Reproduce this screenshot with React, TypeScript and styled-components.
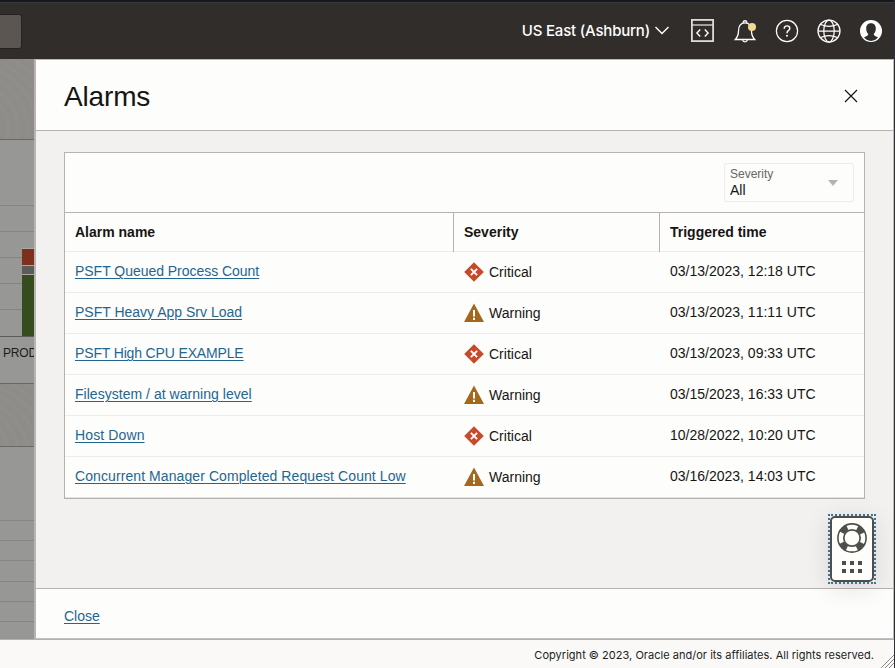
import React from "react";
import styled, { createGlobalStyle } from "styled-components";

const GlobalStyle = createGlobalStyle`
  *, *::before, *::after { box-sizing: border-box; }
  body {
    margin: 0;
    background: #faf9f8;
    color: #161513;
    font-family: "Liberation Sans", Arial, sans-serif;
    font-size: 14px;
  }
  svg { display: block; flex: none; }
`;

const Window = styled.div`
  position: relative;
  width: 895px;
  height: 668px;
  overflow: hidden;
  display: flex;
  flex-direction: column;
  border-right: 1px solid #2c2e36;
`;

const TopBar = styled.header`
  flex: none;
  height: 59px;
  display: flex;
  align-items: flex-start;
  justify-content: space-between;
  background: #312d2a;
  border-top: 2px solid #17181a;
  box-shadow: inset 0 1px 0 #3a3940;
`;

const SearchStub = styled.div`
  width: 22px;
  height: 35px;
  margin-top: 12px;
  background: #5b5651;
  border: 1px solid #26221f;
  border-left: 0;
  border-radius: 0 3px 3px 0;
`;

const TopActions = styled.div`
  display: flex;
  align-items: center;
  height: 57px;
  padding-right: 11px;
  color: #fff;
`;

const Region = styled.div`
  display: flex;
  align-items: center;
  gap: 5px;
  margin-right: 22px;
  font: 500 15px/20px Inter, sans-serif;
  letter-spacing: -0.2px;
  white-space: nowrap;
`;

const ActionIcons = styled.div`
  display: flex;
  align-items: center;
  gap: 18px;
`;

const Main = styled.main`
  flex: none;
  height: 581px;
  display: flex;
  border-bottom: 1px solid #b5b1ae;
`;

const Backdrop = styled.aside`
  flex: none;
  width: 34px;
  overflow: hidden;
  background: #979795;
`;

const Band = styled.div<{ $height: number }>`
  height: ${(p) => p.$height}px;
  border-bottom: 1px solid #6b6866;
  background: repeating-radial-gradient(ellipse at -60px 70px, #8d8c89 0 5px, #8f8e8b 7px 10px);
`;

const ChartBlock = styled.div`
  height: 244px;
  border-bottom: 1px solid #6b6866;
`;

const ChartLabel = styled.div`
  padding: 9px 0 0 3px;
  font-size: 12px;
  line-height: 14px;
  letter-spacing: -0.2px;
  color: #1d1c1b;
`;

const Panel = styled.section`
  flex: 1;
  display: flex;
  flex-direction: column;
  background: #fdfdfc;
  border: 1px solid #bdbab7;
  border-left: 2px solid #b7b4b2;
  border-bottom-color: #c0bfc2;
`;

const PanelHeader = styled.div`
  flex: none;
  height: 71px;
  display: flex;
  align-items: center;
  justify-content: space-between;
  padding: 2px 35px 0 28px;
  border-bottom: 1px solid #b8b2af;
`;

const Title = styled.h1`
  margin: 0;
  padding-top: 2px;
  font-size: 28px;
  line-height: 36px;
  font-weight: 400;
  letter-spacing: -0.15px;
`;

const PanelBody = styled.div`
  flex: none;
  height: 458px;
  padding: 21px 28px;
  background: #f2f1f0;
  border-bottom: 1px solid #b8b2af;
`;

const PanelFooter = styled.div`
  flex: 1;
  display: flex;
  align-items: center;
  padding: 5px 28px 0;
`;

const Link = styled.a<{ $tracking?: number }>`
  color: #1f6690;
  letter-spacing: ${(p) => p.$tracking ?? 0}px;
  text-decoration: underline;
  text-decoration-thickness: 1px;
  text-underline-offset: 2px;
  cursor: pointer;
`;

const TableCard = styled.div`
  width: 801px;
  background: #fdfdfc;
  border: 1px solid #b8b2af;
`;

const Toolbar = styled.div`
  height: 60px;
  display: flex;
  justify-content: flex-end;
  padding: 10px 10px 0 0;
  border-bottom: 1px solid #b8b2af;
`;

const Select = styled.div`
  width: 130px;
  height: 39px;
  display: flex;
  justify-content: space-between;
  align-items: center;
  padding: 0 15px 0 5px;
  border: 1px solid #efedec;
  border-radius: 2px;
`;

const SelectText = styled.div`
  display: flex;
  flex-direction: column;
  padding-bottom: 2px;
  line-height: 16px;
  small { font-size: 12px; color: #6a6663; }
`;

const Row = styled.div<{ $head?: boolean }>`
  display: grid;
  grid-template-columns: 389px 206px 204px;
  height: ${(p) => (p.$head ? 39 : 41)}px;
  border-bottom: 1px solid #efedec;
  font-weight: ${(p) => (p.$head ? 700 : 400)};
  &:last-child { border-bottom-color: #e4e1df; }
`;

const HeadCell = styled.div`
  padding: 11px 10px 0;
  line-height: 16px;
  margin-bottom: -1px;
  & + & { box-shadow: -1px 0 0 #b8b2af; }
`;

const Cell = styled.div`
  padding: 11px 10px 0;
  line-height: 16px;
  white-space: nowrap;
`;

const TimeCell = styled(Cell)`
  font-kerning: none;
`;

const SeverityCell = styled(Cell)`
  display: flex;
  align-items: flex-start;
  gap: 5px;
  padding-top: 10px;
  line-height: 20px;
`;

const Copyright = styled.footer`
  flex: 1;
  padding: 8px 20px 0 0;
  text-align: right;
  font: 400 11px/14px Inter, sans-serif;
  color: #201e1c;
  letter-spacing: 0.026px;
`;

const HelpFrame = styled.div`
  position: absolute;
  left: 830px;
  top: 516px;
  outline: 2px dotted #3d7394;
  box-shadow: 0 5px 26px rgba(40, 30, 30, 0.13);
`;

const HelpButton = styled.button`
  width: 44px;
  height: 66px;
  padding: 5px 0 0;
  display: flex;
  flex-direction: column;
  align-items: center;
  gap: 8px;
  background: #fdfdfc;
  border: 2px solid #504e49;
  border-radius: 5px;
`;

const ResizeGrip = styled.div`
  position: absolute;
  right: 0;
  bottom: 0;
`;

const Chevron = () => (
  <svg width="14" height="9" viewBox="0 0 14 9" fill="none" stroke="#fff" strokeWidth="1.4">
    <path d="M.5 1 7 7.500 13.500 1" />
  </svg>
);

const ConsoleIcon = () => (
  <svg width="24" height="24" viewBox="0 0 24 24" fill="none" stroke="#dedbd8">
    <rect x=".9" y=".9" width="21.200" height="21.200" strokeWidth="1.800" />
    <path d="M1 6h21" strokeWidth="1.300" />
    <path d="m9.200 10.500-3.300 3.500 3.300 3.500M13.800 10.500l3.300 3.500-3.300 3.500" stroke="#fff" strokeWidth="1.400" />
  </svg>
);

const BellIcon = () => (
  <svg width="24" height="24" viewBox="0 0 24 24" fill="none" stroke="#fff" strokeWidth="1.300">
    <path d="M2.300 20.500h19.400c-2.200-2.300-3.200-5-3.200-8.500 0-5-2.100-8.200-6.500-8.200S5.500 7 5.500 12c0 3.500-1 6.200-3.200 8.500Z" />
    <path d="M10.200 3.700c0-2.600 3.600-2.600 3.600 0M9.700 21c.3 2.500 4.300 2.500 4.600 0" />
    <circle cx="19" cy="8" r="4" fill="#f0d992" stroke="none" />
  </svg>
);

const QuestionIcon = () => (
  <svg width="24" height="24" viewBox="0 0 24 24" fill="none" stroke="#fff">
    <circle cx="12" cy="12" r="10.600" strokeWidth="1.200" />
    <path d="M9.200 9.700c0-1.800 1.200-2.800 2.800-2.800s2.800 1 2.800 2.500c0 2.100-2.800 2-2.800 4.800" strokeWidth="1.400" />
    <circle cx="12" cy="16.700" r="1" fill="#fff" stroke="none" />
  </svg>
);

const GlobeIcon = () => (
  <svg width="24" height="24" viewBox="0 0 24 24" fill="none" stroke="#fff" strokeWidth="1.250">
    <circle cx="12" cy="12" r="11" />
    <ellipse cx="12" cy="12" rx="5.200" ry="11" />
    <path d="M1 12h22M3.800 5.500c5 2.200 11.400 2.200 16.400 0M3.800 18.500c5-2.200 11.400-2.200 16.400 0" />
  </svg>
);

const AvatarIcon = () => (
  <svg width="24" height="24" viewBox="0 0 24 24">
    <circle cx="12" cy="12" r="11" fill="#fff" />
    <path
      fill="#312d2a"
      d="M12 4.200c-3.200 0-4.800 2.200-4.800 5.200 0 2.600.8 4.300 2.100 5.500-.2 1.600-1.200 1.900-4.300 3.400 1.600 2.200 4.100 3.600 7 3.600s5.400-1.400 7-3.600c-3.100-1.500-4.100-1.800-4.300-3.400 1.300-1.200 2.100-2.900 2.100-5.500 0-3-1.600-5.200-4.800-5.200Z"
    />
  </svg>
);

const CloseIcon = () => (
  <svg width="14" height="14" viewBox="0 0 14 14" stroke="#161513" strokeWidth="1.200">
    <path d="m1 1 12 12M13 1 1 13" />
  </svg>
);

const CriticalIcon = () => (
  <svg width="20" height="20" viewBox="0 0 20 20">
    <path d="M10 .2 19.800 10 10 19.800.2 10Z" fill="#c74a2b" />
    <path d="m6.900 6.900 6.200 6.200M13.100 6.900l-6.200 6.200" stroke="#fff" strokeWidth="1.900" />
  </svg>
);

const WarningIcon = () => (
  <svg width="20" height="20" viewBox="0 0 20 20">
    <path d="M10 .5 20 19H0Z" fill="#a4671c" />
    <path d="M10 7v6.500M10 14.700v2.200" stroke="#fff" strokeWidth="2" />
  </svg>
);

const LifebuoyIcon = () => (
  <svg width="30" height="30" viewBox="0 0 30 30" fill="none" stroke="#504e49">
    <circle cx="15" cy="15" r="11.500" strokeWidth="6" strokeDasharray="7.600 10.460" strokeDashoffset="-5.230" />
    <circle cx="15" cy="15" r="14.100" strokeWidth="1.600" />
    <circle cx="15" cy="15" r="8.200" strokeWidth="1.700" fill="#fdfdfc" />
  </svg>
);

const DotsIcon = () => (
  <svg width="20" height="12" viewBox="0 0 20 12" fill="#504e49">
    {[0, 8].map((y) => [0, 8, 16].map((x) => <rect key={`${x}-${y}`} x={x} y={y} width="4" height="4" />))}
  </svg>
);

const BarChart = () => (
  <svg width="34" height="197" viewBox="0 0 34 197">
    {[65, 91, 117, 143, 169].map((y) => (
      <rect key={y} y={y} width="34" height="1" fill="#858483" />
    ))}
    <rect x="22" y="108" width="12" height="88" fill="#aaa9a8" />
    <rect x="22" y="109" width="12" height="16" fill="#7d301e" />
    <rect x="22" y="126" width="12" height="8" fill="#5b5b5b" />
    <rect x="22" y="135" width="12" height="61" fill="#354d1e" />
    <rect y="196" width="34" height="1" fill="#5d5c5b" />
  </svg>
);

const GridLines = () => (
  <svg width="34" height="192" viewBox="0 0 34 192" fill="#858588">
    {[73, 93, 113, 134, 154, 174].map((y) => (
      <rect key={y} y={y} width="34" height="1" />
    ))}
  </svg>
);

type Severity = "Critical" | "Warning";

const alarms: { name: string; tracking: number; severity: Severity; time: string }[] = [
  { name: "PSFT Queued Process Count", tracking: -0.03, severity: "Critical", time: "03/13/2023, 12:18 UTC" },
  { name: "PSFT Heavy App Srv Load", tracking: 0, severity: "Warning", time: "03/13/2023, 11:11 UTC" },
  { name: "PSFT High CPU EXAMPLE", tracking: -0.15, severity: "Critical", time: "03/13/2023, 09:33 UTC" },
  { name: "Filesystem / at warning level", tracking: 0.03, severity: "Warning", time: "03/15/2023, 16:33 UTC" },
  { name: "Host Down", tracking: 0.12, severity: "Critical", time: "10/28/2022, 10:20 UTC" },
  {
    name: "Concurrent Manager Completed Request Count Low",
    tracking: 0.085,
    severity: "Warning",
    time: "03/16/2023, 14:03 UTC",
  },
];

export default function App() {
  return (
    <>
      <GlobalStyle />
      <Window>
        <TopBar>
          <SearchStub />
          <TopActions>
            <Region>
              <span>US East (Ashburn)</span>
              <Chevron />
            </Region>
            <ActionIcons>
              <ConsoleIcon />
              <BellIcon />
              <QuestionIcon />
              <GlobeIcon />
              <AvatarIcon />
            </ActionIcons>
          </TopActions>
        </TopBar>
        <Main>
          <Backdrop>
            <Band $height={81} />
            <ChartBlock>
              <BarChart />
              <ChartLabel>PROD</ChartLabel>
            </ChartBlock>
            <Band $height={63} />
            <GridLines />
          </Backdrop>
          <Panel>
            <PanelHeader>
              <Title>Alarms</Title>
              <CloseIcon />
            </PanelHeader>
            <PanelBody>
              <TableCard>
                <Toolbar>
                  <Select>
                    <SelectText>
                      <small>Severity</small>
                      <span>All</span>
                    </SelectText>
                    <svg width="10" height="6" viewBox="0 0 10 6" fill="#b8b3af">
                      <path d="M0 0h10L5 6Z" />
                    </svg>
                  </Select>
                </Toolbar>
                <Row $head>
                  <HeadCell>Alarm name</HeadCell>
                  <HeadCell>Severity</HeadCell>
                  <HeadCell>Triggered time</HeadCell>
                </Row>
                {alarms.map((alarm) => (
                  <Row key={alarm.name}>
                    <Cell>
                      <Link $tracking={alarm.tracking}>{alarm.name}</Link>
                    </Cell>
                    <SeverityCell>
                      {alarm.severity === "Critical" ? <CriticalIcon /> : <WarningIcon />}
                      {alarm.severity}
                    </SeverityCell>
                    <TimeCell>{alarm.time}</TimeCell>
                  </Row>
                ))}
              </TableCard>
            </PanelBody>
            <PanelFooter>
              <Link>Close</Link>
            </PanelFooter>
          </Panel>
        </Main>
        <Copyright>Copyright © 2023, Oracle and/or its affiliates. All rights reserved.</Copyright>
        <HelpFrame>
          <HelpButton aria-label="Help">
            <LifebuoyIcon />
            <DotsIcon />
          </HelpButton>
        </HelpFrame>
        <ResizeGrip>
          <svg width="13" height="13" viewBox="0 0 13 13" stroke="#8d8b89" strokeWidth="1">
            <path d="M0 13 13 0M4 13l9-9M8 13l5-5" />
          </svg>
        </ResizeGrip>
      </Window>
    </>
  );
}
